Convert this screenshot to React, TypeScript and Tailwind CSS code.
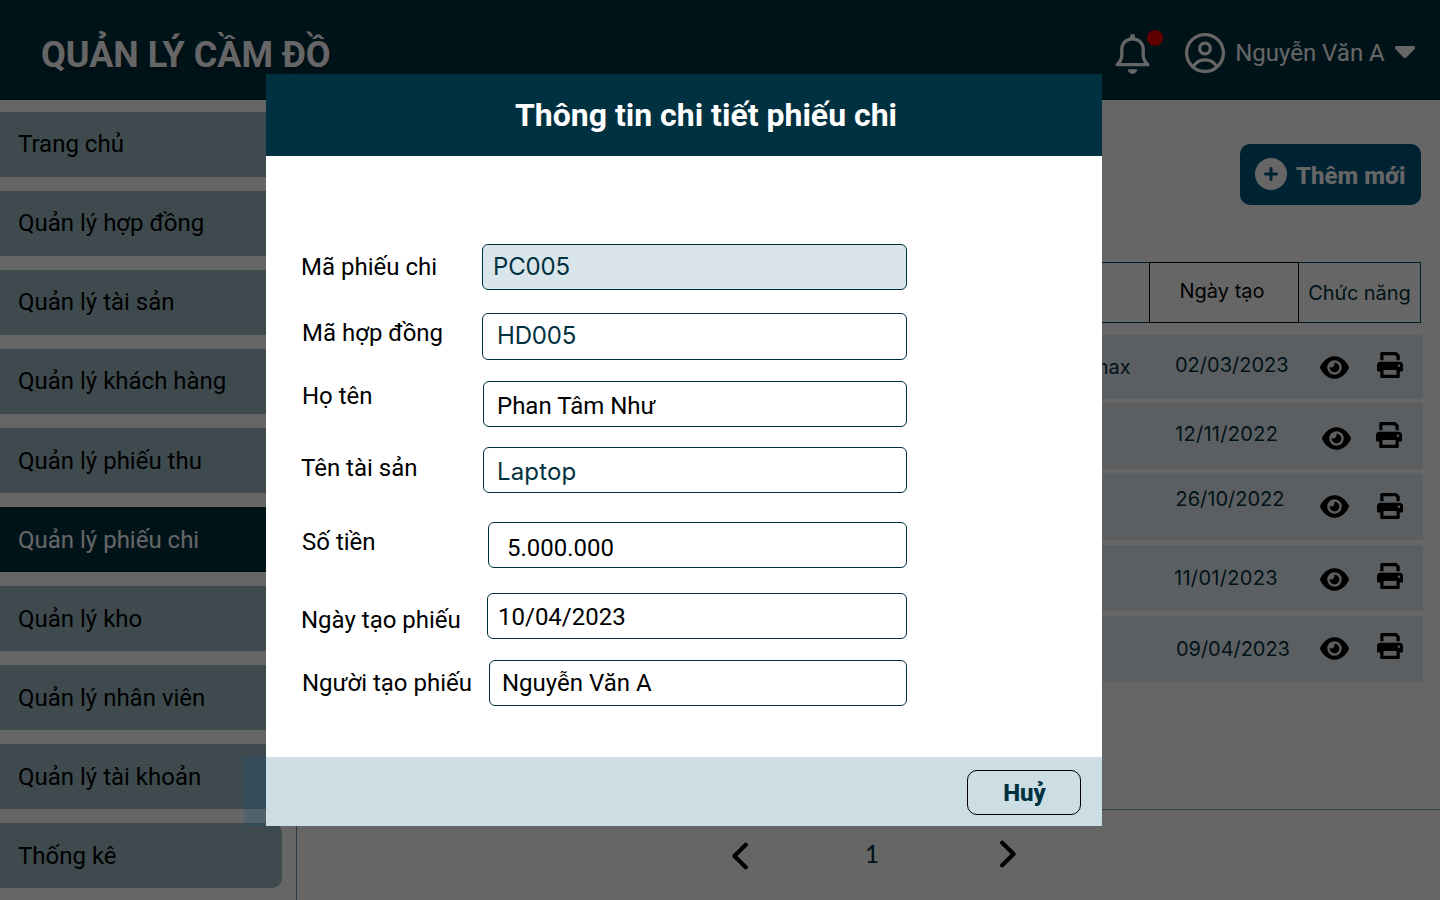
import React from "react";
import { FaEye, FaCirclePlus } from "react-icons/fa6";

const menu = [
  "Trang chủ",
  "Quản lý hợp đồng",
  "Quản lý tài sản",
  "Quản lý khách hàng",
  "Quản lý phiếu thu",
  "Quản lý phiếu chi",
  "Quản lý kho",
  "Quản lý nhân viên",
  "Quản lý tài khoản",
  "Thống kê",
];

const rows = [
  { h: "h-[64px]", mb: "mb-[4px]", item: "max", date: "02/03/2023", text: "pl-[73px] pt-[17px]", eye: "left-[218px] top-[17.5px]", print: "left-[275px] top-[17px]" },
  { h: "h-[66px]", mb: "mb-[5px]", item: "", date: "12/11/2022", text: "pl-[73px] pt-[18px] tracking-[0.3px]", eye: "left-[220px] top-[20.5px]", print: "left-[274px] top-[19px]" },
  { h: "h-[66px]", mb: "mb-[5px]", item: "", date: "26/10/2022", text: "pl-[73.5px] pt-[12px]", eye: "left-[218px] top-[17.5px]", print: "left-[275px] top-[19px]" },
  { h: "h-[66px]", mb: "mb-[5px]", item: "", date: "11/01/2023", text: "pl-[72px] pt-[20px] tracking-[0.3px]", eye: "left-[218px] top-[19.5px]", print: "left-[275px] top-[18px]" },
  { h: "h-[66px]", mb: "mb-0", item: "", date: "09/04/2023", text: "pl-[74px] pt-[20px] tracking-[-0.05px]", eye: "left-[218px] top-[17.5px]", print: "left-[275px] top-[17px]" },
];

const inter = "font-['Inter',sans-serif]";

const fields = [
  { label: "Mã phiếu chi", value: "PC005", mt: "mt-0", lab: "w-[181px] pl-0 -mt-px", box: "h-[46px] bg-[#d9e5ea] pl-[10px] text-[#003140] font-['Inter',sans-serif]", txt: "-mt-px tracking-[-0.15px]" },
  { label: "Mã hợp đồng", value: "HD005", mt: "mt-[23px]", lab: "w-[181px] pl-px -mt-[8px]", box: "h-[47px] pl-[14px] text-[#003140] font-['Inter',sans-serif]", txt: "-mt-[2px] tracking-[-0.2px]" },
  { label: "Họ tên", value: "Phan Tâm Như", mt: "mt-[21px]", lab: "w-[182px] pl-px -mt-[16px]", box: "h-[46px] pl-[13px] text-black", txt: "mt-[4px]" },
  { label: "Tên tài sản", value: "Laptop", mt: "mt-[20px]", lab: "w-[182px] pl-0 -mt-[4px]", box: "h-[46px] pl-[13px] text-[#003140] font-['Inter',sans-serif]", txt: "mt-[3px] tracking-[0.15px]" },
  { label: "Số tiền", value: "5.000.000", mt: "mt-[29px]", lab: "w-[187px] pl-px -mt-[6px]", box: "h-[46px] pl-[18px] text-black", txt: "mt-[6px]" },
  { label: "Ngày tạo phiếu", value: "10/04/2023", mt: "mt-[25px]", lab: "w-[186px] pl-0 mt-[8px]", box: "h-[46px] pl-[10px] text-black", txt: "mt-[2px]" },
  { label: "Người tạo phiếu", value: "Nguyễn Văn A", mt: "mt-[21px]", lab: "w-[188px] pl-px mt-0", box: "h-[46px] pl-[12px] text-black", txt: "mt-0" },
];

function Bell() {
  return (
    <svg width="36" height="40" viewBox="0 0 36 40" fill="none">
      <path d="M17.500 4.800c-6.400 0-10.700 4.600-10.700 10.600v6.200c0 3.600-1.500 6-4.600 9.100h30.600c-3.100-3.100-4.600-5.500-4.600-9.100v-6.200c0-6-4.300-10.600-10.700-10.600Z" stroke="#fff" strokeWidth="3.300" strokeLinejoin="round" />
      <path d="M15 4.500V2.600a2.500 2.500 0 0 1 5 0v1.900ZM12.800 35.300h9.400a4.700 4.700 0 0 1-9.400 0Z" fill="#fff" />
    </svg>
  );
}

function Avatar() {
  return (
    <svg width="40" height="40" viewBox="0 0 40 40" fill="none" stroke="#fff" strokeWidth="3.200">
      <circle cx="20" cy="20" r="18.4" />
      <circle cx="20" cy="15.5" r="5.300" />
      <path d="M8.200 33.500c3-4.700 7-6.700 11.800-6.700s8.800 2 11.800 6.700" />
    </svg>
  );
}

function Printer({ className }: { className: string }) {
  return (
    <svg width="26" height="26" viewBox="0 0 512 512" fill="#000" className={className}>
      <path d="M448 192H64C28.650 192 0 220.700 0 256v96c0 17.670 14.330 32 32 32h32v96c0 17.670 14.330 32 32 32h320c17.670 0 32-14.330 32-32v-96h32c17.670 0 32-14.330 32-32V256C512 220.700 483.300 192 448 192zM384 448H128v-96h256V448zM432 296c-13.250 0-24-10.750-24-24c0-13.270 10.750-24 24-24S456 258.700 456 272C456 285.300 445.300 296 432 296zM128 64h229.500L384 90.510V160h64V77.250c0-8.484-3.375-16.620-9.375-22.620l-45.250-45.250C387.400 3.375 379.200 0 370.800 0H96C78.340 0 64 14.330 64 32v128h64V64z" />
    </svg>
  );
}

function Chevron({ className }: { className: string }) {
  return (
    <svg width="18" height="28" viewBox="0 0 18 28" fill="none" stroke="#000" strokeWidth="4.200" strokeLinecap="round" strokeLinejoin="round" className={className}>
      <path d="M14.800 2.800 3.400 14l11.400 11.200" />
    </svg>
  );
}

function Header() {
  return (
    <header className="flex h-[100px] shrink-0 items-start justify-between bg-[#003140] pl-[41px] pr-[25px] text-white">
      <h1 className="mt-[34px] text-[36px] leading-[42px] font-bold [text-shadow:0_4px_4px_rgba(0,0,0,0.25)]">QUẢN LÝ CẦM ĐỒ</h1>
      <div className="mt-[33px] flex h-[41px] items-start">
        <div className="relative mr-[34px] pt-px">
          <Bell />
          <span className="absolute -top-[3px] left-[32px] size-4 rounded-full bg-[#f00000]" />
        </div>
        <Avatar />
        <span className="ml-[9.75px] mr-[0.25px] mt-[6px] text-[24px] leading-[28px]">Nguyễn Văn A</span>
        <svg className="ml-[10px] mt-[13px]" width="20" height="12" viewBox="0 0 20 12" fill="#fff">
          <path d="M2 0h16c2 0 2.600 1.900 1.400 3.200l-7.700 8c-1 1-2.400 1-3.400 0l-7.700-8C-.6 1.900 0 0 2 0Z" />
        </svg>
      </div>
    </header>
  );
}

function Sidebar() {
  return (
    <nav className="flex w-[297px] shrink-0 flex-col gap-[14px] border-r border-[#6f9fb5] pt-[12px]">
      {menu.map((m, i) => (
        <div
          key={m}
          className={
            "flex h-[65px] w-[282px] shrink-0 items-center rounded-r-[10px] pl-[18px] text-[24px] leading-[28px] " +
            (i === 5 ? "bg-[#003140] text-white " : "bg-[#9ebac6] text-black ") +
            (i < 4 ? "pb-px" : "pt-px")
          }
        >
          {m}
        </div>
      ))}
    </nav>
  );
}

function Content() {
  return (
    <main className="flex grow flex-col">
      <div className="flex h-[162px] justify-end pr-[19px] pt-[44px]">
        <button className="flex h-[61px] w-[181px] items-center rounded-[10px] bg-[#005780] pl-[15px] text-[24px] font-bold text-white">
          <FaCirclePlus size={32} className="-mt-[2px]" />
          <span className="ml-[9px] mt-[2px] font-extrabold">Thêm mới</span>
        </button>
      </div>
      <div className={"flex h-[61px] justify-end pr-[19px] text-[20px] " + inter}>
        <div className="w-[520px] border-y border-[#004a68]" />
        <div className="flex w-[150px] justify-center border border-black pt-[13px] pr-[4px] text-black">Ngày tạo</div>
        <div className="flex w-[122px] justify-center border border-l-0 border-[#004a68] pt-[15px] tracking-[-0.05px] text-[#003140]">Chức năng</div>
      </div>
      <div className={"mt-[12px] flex flex-col items-end pr-[17px] text-[20px] text-[#003140] " + inter}>
        {rows.map((r) => (
          <div key={r.date} className={"flex w-[840px] shrink-0 justify-end bg-[#e4edf4] " + r.h + " " + r.mb}>
            <div className="w-[60px] pt-[17px]">{r.item && <span className="ml-[30px]">{r.item}</span>}</div>
            <div className="relative -ml-[19px] w-[321px]">
              <div className={"leading-[26px] " + r.text}>{r.date}</div>
              <FaEye size={29} color="#000" className={"absolute " + r.eye} />
              <Printer className={"absolute " + r.print} />
            </div>
          </div>
        ))}
      </div>
      <footer className="mt-[127px] flex grow items-start border-t border-[#6f9fb5] text-[#003140]">
        <Chevron className="ml-[434px] mt-[32px]" />
        <span className="ml-[116px] mr-px mt-[30px] w-[16px] text-[24px] leading-[28px] font-medium font-['Lato',sans-serif]">1</span>
        <Chevron className="ml-[117px] mt-[30px] rotate-180" />
      </footer>
    </main>
  );
}

function Modal() {
  return (
    <section className="absolute left-[266px] top-[74px] flex h-[752px] w-[836px] flex-col bg-white">
      <h2 className="flex h-[82px] shrink-0 items-center justify-center bg-[#003140] pl-[44px] text-[32px] font-bold text-white">
        Thông tin chi tiết phiếu chi
      </h2>
      <div className="flex grow flex-col pl-[35px] pr-[195px] pt-[88px] text-[24px]">
        {fields.map((f) => (
          <div key={f.label} className={"flex items-center " + f.mt}>
            <div className={"shrink-0 " + f.lab}>
              <div className="h-[28px] leading-[28px] whitespace-nowrap text-black">{f.label}</div>
            </div>
            <div className={"flex grow items-center rounded-[6px] border border-[#003140] " + f.box}>
              <span className={"leading-[28px] " + f.txt}>{f.value}</span>
            </div>
          </div>
        ))}
      </div>
      <div className="flex h-[69px] shrink-0 items-start justify-end bg-[#ccdde3] pr-[21px] pt-[13px]">
        <button className="flex h-[45px] w-[114px] items-center justify-center rounded-[10px] border border-black pl-px text-[24px] font-extrabold text-[#003140]">Huỷ</button>
      </div>
    </section>
  );
}

export default function App() {
  return (
    <div className="relative flex h-[900px] w-[1440px] flex-col overflow-hidden bg-white font-['Roboto',sans-serif]">
      <Header />
      <div className="flex h-[800px]">
        <Sidebar />
        <Content />
      </div>
      <div className="absolute inset-0 bg-black/60" />
      <div className="absolute left-[244px] top-[757px] h-[69px] w-[22px] bg-[#005780]/20" />
      <Modal />
    </div>
  );
}
